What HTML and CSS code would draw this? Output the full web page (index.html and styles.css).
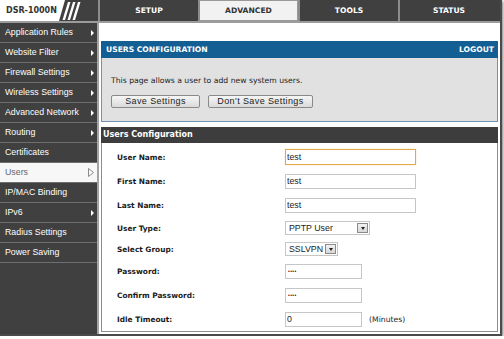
FILE: index.html
```html
<!DOCTYPE html>
<html lang="en">
<head>
    <meta charset="UTF-8">
    <meta name="viewport" content="width=device-width, initial-scale=1.0">
    <title>DSR-1000N - Users</title>
    <link rel="stylesheet" href="styles.css">
</head>
<body>
    <div class="frame">
        <div class="topbar">
            <div class="logo">
                <span class="logo-name">DSR-1000N</span>
                <svg class="logo-slashes" width="40" height="21" viewBox="0 0 40 21">
                    <polygon points="0,0 7,0 1,21 0,21" fill="#fff"/>
                    <polygon points="10,2 12.5,2 7,20 4.5,20" fill="#fff"/>
                    <polygon points="15,2 17.5,2 12,20 9.5,20" fill="#fff"/>
                    <polygon points="20,2 22.5,2 17,20 14.5,20" fill="#fff"/>
                </svg>
            </div>
            <div class="tab">SETUP</div>
            <div class="tab active">ADVANCED</div>
            <div class="tab">TOOLS</div>
            <div class="tab">STATUS</div>
        </div>

        <div class="main">
            <ul class="sidebar">
                <li class="menu-item has-sub">Application Rules</li>
                <li class="menu-item has-sub">Website Filter</li>
                <li class="menu-item has-sub">Firewall Settings</li>
                <li class="menu-item has-sub">Wireless Settings</li>
                <li class="menu-item has-sub">Advanced Network</li>
                <li class="menu-item has-sub">Routing</li>
                <li class="menu-item">Certificates</li>
                <li class="menu-item current">Users
                    <svg width="6" height="9" viewBox="0 0 6 9"><polygon points="0.5,0.5 5.5,4.5 0.5,8.5" fill="none" stroke="#8a8a8a" stroke-width="1"/></svg>
                </li>
                <li class="menu-item">IP/MAC Binding</li>
                <li class="menu-item has-sub">IPv6</li>
                <li class="menu-item">Radius Settings</li>
                <li class="menu-item">Power Saving</li>
            </ul>

            <div class="content">
                <div class="panel info">
                    <div class="panel-head">
                        <span>USERS CONFIGURATION</span>
                        <span>LOGOUT</span>
                    </div>
                    <div class="info-body">
                        <p>This page allows a user to add new system users.</p>
                        <div class="actions">
                            <button class="btn btn-save">Save Settings</button>
                            <button class="btn btn-cancel">Don't Save Settings</button>
                        </div>
                    </div>
                </div>

                <div class="panel form">
                    <div class="form-head">Users Configuration</div>
                    <div class="form-body">
                        <div class="row">
                            <label>User Name:</label>
                            <input class="field wide focused" type="text" value="test">
                        </div>
                        <div class="row">
                            <label>First Name:</label>
                            <input class="field wide" type="text" value="test">
                        </div>
                        <div class="row">
                            <label>Last Name:</label>
                            <input class="field wide" type="text" value="test">
                        </div>
                        <div class="row row-select">
                            <label>User Type:</label>
                            <div class="select type-select"><span>PPTP User</span><span class="arrow"></span></div>
                        </div>
                        <div class="row row-group">
                            <label>Select Group:</label>
                            <div class="select group-select"><span>SSLVPN</span><span class="arrow"></span></div>
                        </div>
                        <div class="row">
                            <label>Password:</label>
                            <input class="field short secret" type="password" value="test">
                        </div>
                        <div class="row">
                            <label>Confirm Password:</label>
                            <input class="field short secret" type="password" value="test">
                        </div>
                        <div class="row">
                            <label>Idle Timeout:</label>
                            <input class="field short" type="text" value="0">
                            <span class="unit">(Minutes)</span>
                        </div>
                    </div>
                </div>
            </div>
        </div>
    </div>
</body>
</html>
```

FILE: styles.css
```css
* {
    margin: 0;
    padding: 0;
    box-sizing: border-box;
}

body {
    font-family: 'DejaVu Sans', sans-serif;
    background: #fff;
    color: #222;
}

.frame {
    width: 502px;
    height: 336px;
    background: #fff;
    border-right: 2px solid #4a4a4a;
    border-bottom: 2px solid #4a4a4a;
    box-shadow: 1px 1px 3px rgba(0,0,0,0.55);
    display: flex;
    flex-direction: column;
}

/* top navigation */
.topbar {
    height: 23px;
    display: flex;
    background: #404040;
    border-bottom: 2px solid #9c9c9c;
    flex-shrink: 0;
}

.logo {
    width: 98px;
    display: flex;
}

.logo-name {
    width: 58px;
    background: #fff;
    color: #333;
    font-weight: bold;
    font-size: 8px;
    line-height: 21px;
    padding-left: 6px;
    white-space: nowrap;
}

.tab {
    width: 100px;
    border-left: 2px solid #8c8c8c;
    color: #fff;
    font-weight: bold;
    font-size: 7.6px;
    line-height: 21px;
    text-align: center;
}

.tab.active {
    background: #f2f2f2;
    color: #333;
    border: 1px solid #999;
    border-left: 2px solid #8c8c8c;
    line-height: 19px;
}

/* left menu */
.main {
    flex: 1;
    display: flex;
}

.sidebar {
    list-style: none;
    width: 99px;
    background: #404040;
    border-right: 2px solid #a4a4a4;
    flex-shrink: 0;
}

.menu-item {
    height: 20px;
    border-bottom: 1px solid #6e6e6e;
    font-family: 'Liberation Sans', Arial, sans-serif;
    font-size: 8.8px;
    line-height: 19px;
    color: #fff;
    padding: 0 3px 0 5px;
    display: flex;
    justify-content: space-between;
    align-items: center;
}

.menu-item.has-sub::after {
    content: "";
    border-left: 3px solid #fff;
    border-top: 3px solid transparent;
    border-bottom: 3px solid transparent;
}

.menu-item.current {
    background: #f7f7f7;
    color: #666;
}

/* content */
.content {
    flex: 1;
    display: flex;
    flex-direction: column;
    padding: 18px 2px 2px 2px;
}

.panel-head {
    height: 17px;
    background: #135f94;
    color: #fff;
    font-weight: bold;
    font-size: 7.6px;
    line-height: 17px;
    display: flex;
    justify-content: space-between;
    padding: 0 4px 0 5px;
}

.info-body {
    height: 64px;
    background: #e1e1e1;
    border: 1px solid #6f93b6;
    border-top: none;
    padding: 18px 8px 0 9px;
}

.info-body p {
    font-size: 7.7px;
    line-height: 10px;
    height: 10px;
}

.actions {
    display: flex;
    gap: 8px;
    margin-top: 9px;
}

.btn {
    height: 13px;
    background: linear-gradient(#f6f6f6, #dadada);
    border: 1px solid #8a8a8a;
    border-radius: 2px;
    font-family: 'Liberation Sans', Arial, sans-serif;
    font-size: 9px;
    letter-spacing: 0.4px;
    color: #222;
    line-height: 11px;
}

.btn-save {
    width: 89px;
}

.btn-cancel {
    width: 105px;
}

.panel.form {
    flex: 1;
    margin-top: 5px;
    display: flex;
    flex-direction: column;
}

.form-head {
    height: 16px;
    background: #3d3d3d;
    color: #fff;
    font-weight: bold;
    font-size: 8px;
    line-height: 16px;
    padding-left: 2px;
}

.form-body {
    flex: 1;
    border: 1px solid #8c8c8c;
    border-top: none;
    padding: 2px 0 0 15px;
}

.row {
    height: 24px;
    display: flex;
    align-items: center;
}

.row-select {
    height: 22px;
}

.row-group {
    height: 20px;
}

.row label {
    width: 168px;
    font-weight: bold;
    font-size: 7.4px;
    color: #1a1a1a;
}

.field {
    height: 15px;
    border: 1px solid #c6c6c6;
    background: #fff;
    font-family: 'Liberation Sans', Arial, sans-serif;
    font-size: 8.8px;
    color: #222;
    padding: 0 1px;
    outline: none;
}

.field.wide {
    width: 131px;
}

.field.short {
    width: 77px;
}

.field.focused {
    height: 16px;
    border-color: #e2a94c;
    box-shadow: 0 0 1px #f0c880;
}

.field.secret {
    font-size: 5px;
    letter-spacing: 0.4px;
    padding-left: 2px;
}

.select {
    height: 14px;
    border: 1px solid #c6c6c6;
    background: #fff;
    font-family: 'Liberation Sans', Arial, sans-serif;
    font-size: 8.8px;
    color: #222;
    display: flex;
    align-items: center;
    justify-content: space-between;
    padding: 0 1px 0 3px;
}

.type-select {
    width: 85px;
}

.group-select {
    width: 53px;
}

.arrow {
    width: 11px;
    height: 10px;
    background: linear-gradient(#f2f2f2, #d8d8d8);
    border: 1px solid #8a8a8a;
    display: flex;
    align-items: center;
    justify-content: center;
}

.arrow::after {
    content: "";
    border-top: 3px solid #222;
    border-left: 2.5px solid transparent;
    border-right: 2.5px solid transparent;
}

.unit {
    margin-left: 7px;
    font-size: 7.7px;
    color: #222;
}
```
